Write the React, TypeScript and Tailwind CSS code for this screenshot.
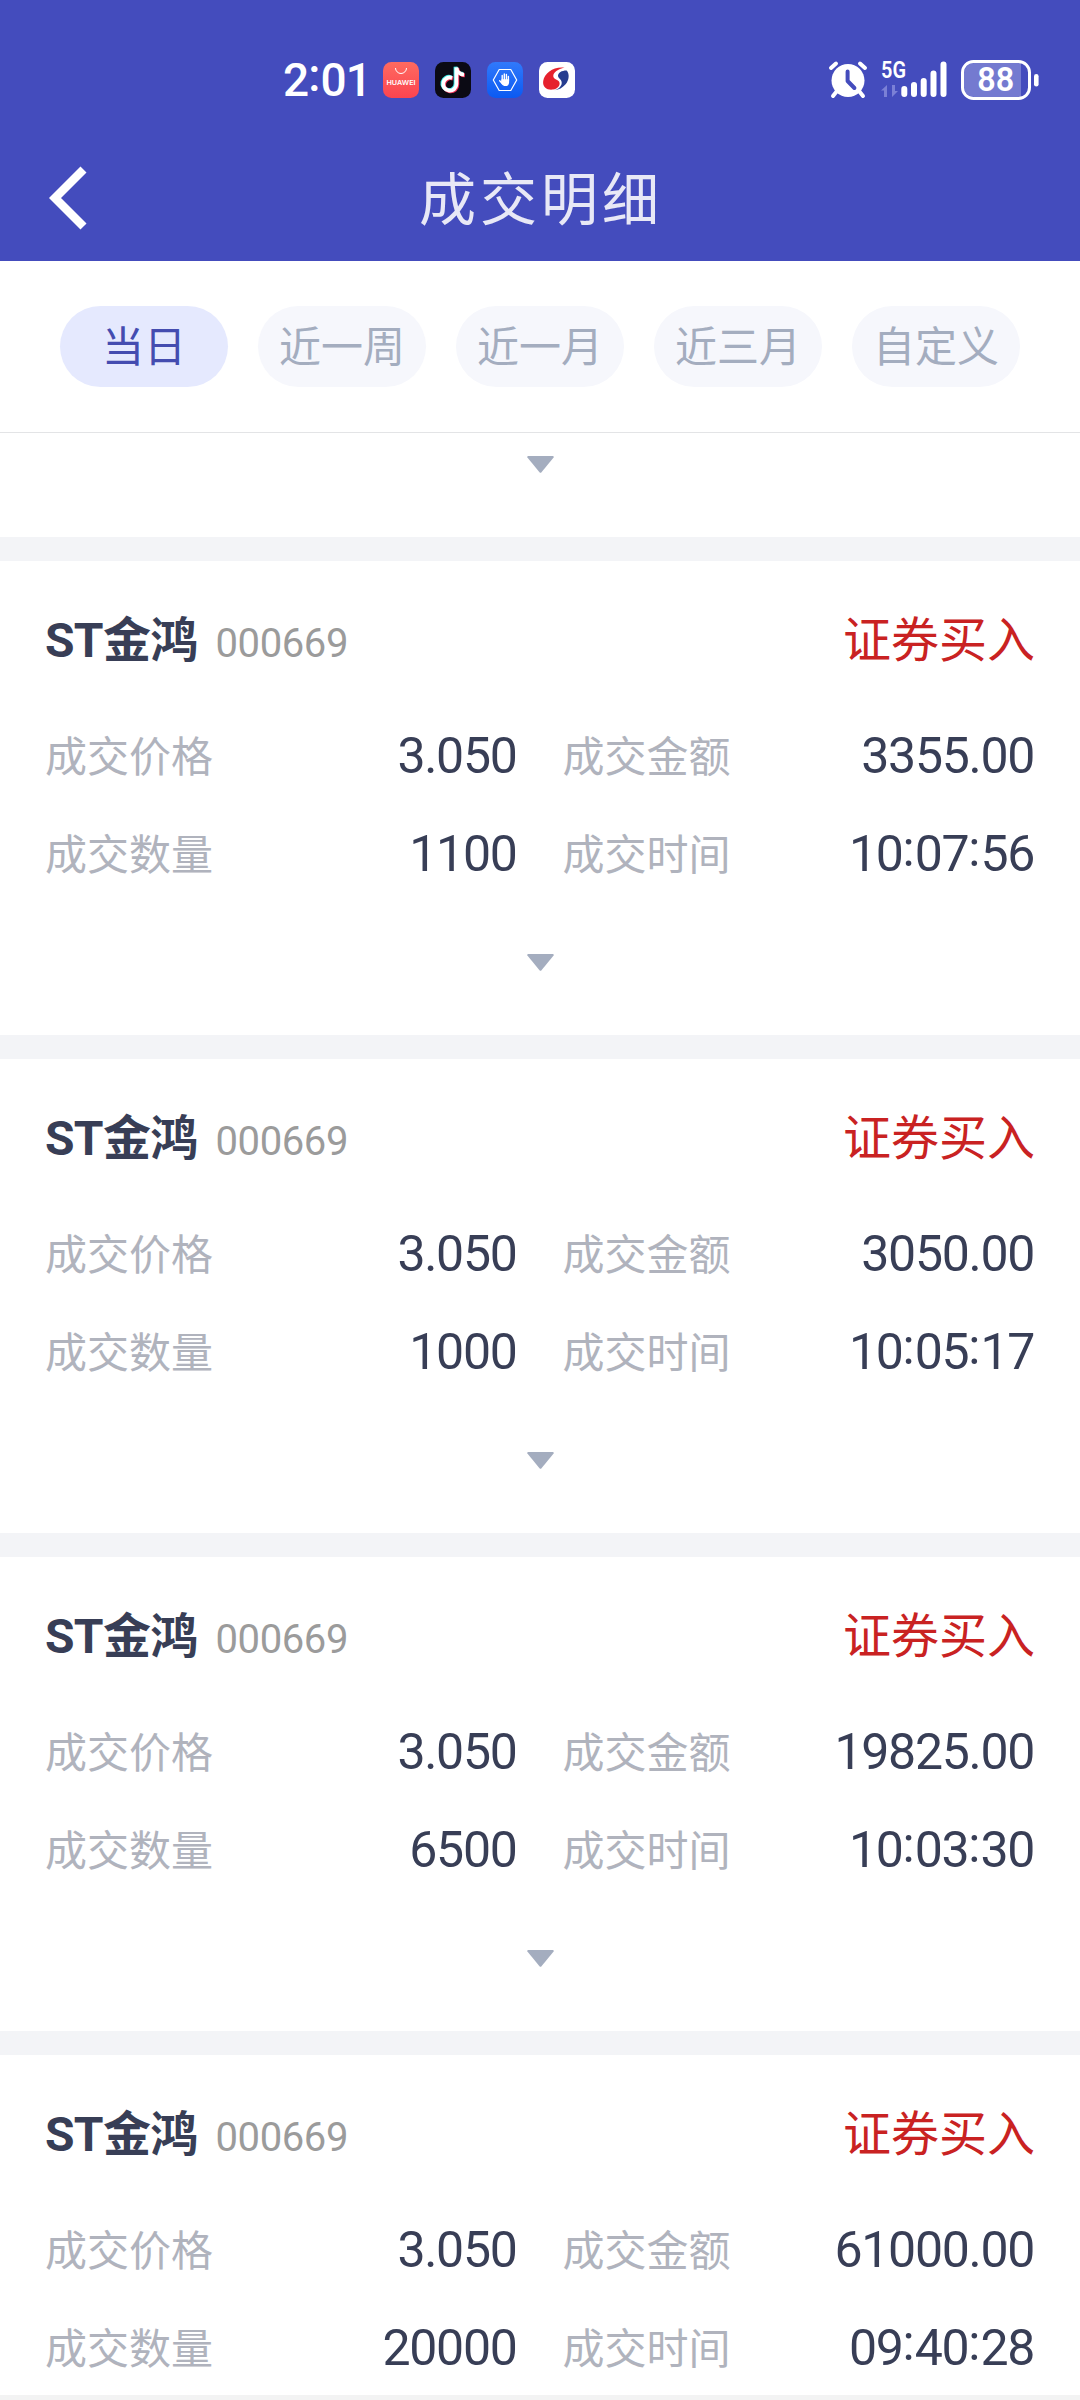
import { useState } from 'react'

const ranges = ['当日', '近一周', '近一月', '近三月', '自定义']

const deals = [
  { name: 'ST金鸿', code: '000669', side: '证券买入', price: '3.050', amount: '3355.00', count: '1100', time: '10:07:56' },
  { name: 'ST金鸿', code: '000669', side: '证券买入', price: '3.050', amount: '3050.00', count: '1000', time: '10:05:17' },
  { name: 'ST金鸿', code: '000669', side: '证券买入', price: '3.050', amount: '19825.00', count: '6500', time: '10:03:30' },
  { name: 'ST金鸿', code: '000669', side: '证券买入', price: '3.050', amount: '61000.00', count: '20000', time: '09:40:28' }
]

// Colons sit at mid height of the digits
function Digits({ text }: { text: string }) {
  const parts = text.split(':')
  return (
    <>
      {parts.map((part, index) => (
        <span key={index}>
          {index > 0 && <span className="align-[5px] leading-[0] tracking-normal">:</span>}
          {part}
        </span>
      ))}
    </>
  )
}

function StatusBar() {
  return (
    <div className="flex h-[160px] items-center pl-[283px] pr-[41px] text-white">
      <span className="w-[100px] whitespace-nowrap text-[46px] font-medium leading-none tracking-[-0.8px]">
        <Digits text="2:01" />
      </span>
      <div className="flex gap-4">
        {/* Huawei */}
        <svg className="h-9 w-9" viewBox="0 0 36 36">
          <defs>
            <linearGradient id="huawei" x1="0" y1="0" x2="0" y2="1">
              <stop offset="0" stopColor="#ff6a60" />
              <stop offset="1" stopColor="#fb4450" />
            </linearGradient>
          </defs>
          <rect width="36" height="36" rx="8.5" fill="url(#huawei)" />
          <path d="M12.5 6a5.5 5.5 0 0011 0" fill="none" stroke="#fff" strokeWidth="1" />
          <text x="18" y="23" textAnchor="middle" textLength="29" lengthAdjust="spacingAndGlyphs" fontSize="6.6" fontWeight="600" fontFamily="Inter, sans-serif" fill="#fff">HUAWEI</text>
        </svg>
        {/* Douyin */}
        <svg className="h-9 w-9" viewBox="0 0 36 36">
          <rect width="36" height="36" rx="8.5" fill="#0b0a14" />
          <g fill="none" strokeWidth="3.8">
            <path d="M16.2 15.2a6.6 6.6 0 104.3 6.2V4.7c.4 3.8 3.2 7 7.6 7.3" stroke="#33e6e4" />
            <path d="M18 16.6a6.6 6.6 0 104.3 6.2V6.1c.4 3.8 3.2 7 7.6 7.3" stroke="#f5355a" />
            <path d="M17.1 15.9a6.6 6.6 0 104.3 6.2V5.4c.4 3.8 3.2 7 7.6 7.3" stroke="#fff" />
          </g>
        </svg>
        {/* Hand */}
        <svg className="h-9 w-9" viewBox="0 0 36 36">
          <defs>
            <linearGradient id="hand" x1="0" y1="0" x2="0" y2="1">
              <stop offset="0" stopColor="#3179fb" />
              <stop offset="1" stopColor="#0b5af2" />
            </linearGradient>
          </defs>
          <rect width="36" height="36" rx="8.5" fill="url(#hand)" />
          <path d="M12.2 7.5h11.6L29.7 18l-5.9 10.5H12.2L6.3 18z" fill="none" stroke="#fff" strokeWidth="1.2" strokeLinejoin="round" />
          <g fill="none" stroke="#fff" strokeWidth="1.4" strokeLinecap="round" strokeLinejoin="round">
            <path d="M15.2 13.4V19M17.3 12V18M19.4 12.5V18M21.4 14.5V19M12.7 18.8l2.8 3" />
          </g>
          <path d="M14.5 17.300h7.600v3.100a3.800 3.800 0 01-3.800 3.600c-1.600 0-2.600-.6-3.400-1.800l-.9-1.500z" fill="#fff" />
        </svg>
        {/* Broker */}
        <svg className="h-9 w-9" viewBox="0 0 36 36">
          <rect width="36" height="36" rx="8.5" fill="#fff" />
          <path d="M25.5 5.6C15 4.2 5.500 10.500 4.200 19c-1 6.500 4.500 9.500 9.800 8.600 5-.9 8-5.200 6-8.200-1.500-2-5.500-2.200-5.700-5.200C14.100 10.600 19 7.200 25.500 5.600z" fill="#e6212d" />
          <path d="M27.600 8.400c3.200 3.200 2.600 9.600-1 13.800-3 3.500-6.800 5.500-11 6 5.200-1.900 7.900-5.200 6.900-8.800-.6-2.200-3.500-3.200-3.500-5.800 0-3 4-5.300 8.600-5.200z" fill="#263d8f" />
        </svg>
      </div>

      <div className="ml-auto flex items-center">
        {/* Alarm */}
        <svg className="mr-[13px] h-10 w-10" viewBox="0 0 40 40">
          <g stroke="#fff" strokeWidth="4" strokeLinecap="round">
            <path d="M3 8l5-4.500M37 8l-5-4.500M9 31l-4 5M31 31l4 5" />
          </g>
          <circle cx="20" cy="20.500" r="16.500" fill="#fff" />
          <path d="M19.600 11.500v9.500l6.800 7" fill="none" stroke="#444cbd" strokeWidth="4" strokeLinecap="round" strokeLinejoin="round" />
        </svg>
        {/* Signal */}
        <svg className="mr-[13px] h-[60px] w-[67px]" viewBox="0 -10 67 60">
          <text x="0" y="18" textLength="25" lengthAdjust="spacingAndGlyphs" fontSize="23" fontWeight="600" fontFamily="Roboto, sans-serif" fill="#fff">5G</text>
          <path d="M0 30.500l6-5.500v12H3v-6.500zM17 31l-6 6V25h3v6z" fill="#7b80d6" />
          <g stroke="#fff" strokeWidth="6" strokeLinecap="round">
            <path d="M23.300 29v5M33 25v9M42.700 21v13M52.500 13.500V34M62.500 4.500V34" />
          </g>
        </svg>
        {/* Battery */}
        <svg className="h-10 w-[78px]" viewBox="0 0 78 40">
          <path d="M13 3h47v34H13A10 10 0 013 27V13A10 10 0 0113 3z" fill="#747ad0" />
          <rect x="1.500" y="1.500" width="67" height="37" rx="11" fill="none" stroke="#fff" strokeWidth="3" />
          <rect x="73" y="14" width="4.600" height="12.500" rx="2.300" fill="#fff" />
          <text x="34.700" y="31" textAnchor="middle" textLength="37" lengthAdjust="spacingAndGlyphs" fontSize="33" fontWeight="600" fontFamily="Roboto, sans-serif" fill="#fff">88</text>
        </svg>
      </div>
    </div>
  )
}

function Arrow() {
  return (
    <svg className="mx-auto block h-[17px] w-[27px]" viewBox="0 0 27 17">
      <path d="M1.200 0h24.600q1.200 0 .8 1.500L14.500 16.300q-1 1-2 0L.4 1.500Q0 0 1.200 0z" fill="#a4adbf" />
    </svg>
  )
}

function Field({ label, value }: { label: string; value: string }) {
  return (
    <div className="flex flex-1 items-center justify-between">
      <span className="pt-[3px] text-[42px] text-[#b0b3bd]">{label}</span>
      <span className="pr-px text-[50px] tracking-[-1.3px] text-[#383e56]">
        <Digits text={value} />
      </span>
    </div>
  )
}

export default function App() {
  const [active, setActive] = useState(0)

  return (
    <div className="flex h-[2400px] w-[1080px] flex-col overflow-hidden bg-white font-[Roboto,'Noto_Sans_CJK_SC',sans-serif]">
      <header className="h-[261px] shrink-0 bg-[#444cbd]">
        <StatusBar />
        <div className="grid h-[76px] grid-cols-[150px_1fr_150px] items-center">
          <svg className="ml-[49px] h-[64px] w-[38px]" viewBox="0 0 38 64">
            <path d="M34.500 3.500L6 32l28.500 28.500" fill="none" stroke="#fff" strokeWidth="8.500" />
          </svg>
          <h1 className="pl-0.5 pt-[5px] text-center text-[57px] leading-none tracking-[4px] text-[#e8e8f6]">成交明细</h1>
        </div>
      </header>

      {/* Filtres de période */}
      <div className="flex h-[172px] shrink-0 items-center justify-center gap-[30px] border-b border-[#e3e4e6]">
        {ranges.map((range, index) => (
          <button
            key={range}
            onClick={() => setActive(index)}
            className={`h-[81px] w-[168px] rounded-full pt-[3px] text-[42px] leading-none ${
              active === index ? 'bg-[#e5e9fe] text-[#444cb0]' : 'bg-[#f6f7fc] text-[#a4adbf]'
            }`}
          >
            {range}
          </button>
        ))}
      </div>

      <div className="flex-1 overflow-hidden">
        <div className="h-[104px] pt-[23px]">
          <Arrow />
        </div>
        {deals.map(deal => (
          <div key={deal.time} className="h-[498px] border-t-[24px] border-[#f3f4f7] px-[45px] leading-none">
            <div className="flex h-[156px] items-center justify-between pt-[3px]">
              <div className="flex items-baseline gap-[18px]">
                <span className="text-[48px] font-bold tracking-[-0.7px] text-[#383e56]">{deal.name}</span>
                <span className="text-[40px] tracking-[-0.4px] text-[#9b9b9b]">{deal.code}</span>
              </div>
              <span className="text-[48px] text-[#c92222]">{deal.side}</span>
            </div>
            <div className="flex h-[78px] items-center gap-[45px]">
              <Field label="成交价格" value={deal.price} />
              <Field label="成交金额" value={deal.amount} />
            </div>
            <div className="mt-5 mb-[61px] flex h-[78px] items-center gap-[45px]">
              <Field label="成交数量" value={deal.count} />
              <Field label="成交时间" value={deal.time} />
            </div>
            <Arrow />
          </div>
        ))}
      </div>
      <div className="h-[5px] shrink-0 bg-[#f3f3f3]"></div>
    </div>
  )
}
